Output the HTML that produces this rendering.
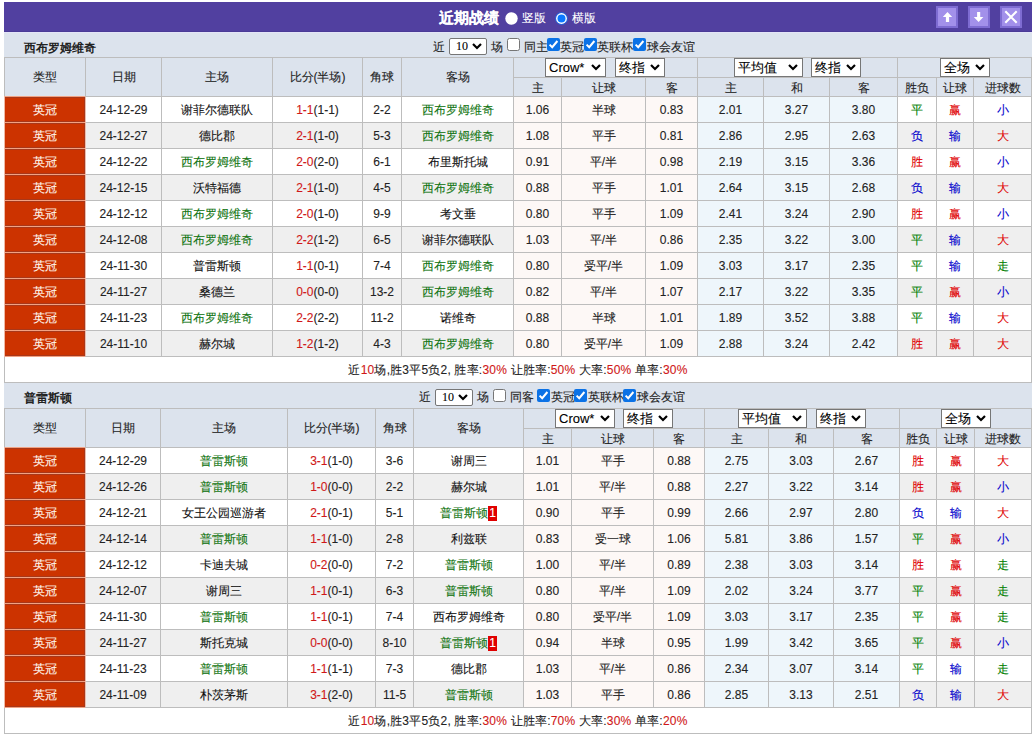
<!DOCTYPE html>
<html><head><meta charset="utf-8"><title>近期战绩</title><style>
html,body{margin:0;padding:0;}
body{width:1034px;height:736px;position:relative;overflow:hidden;background:#fff;font-family:"Liberation Sans",sans-serif;font-size:12px;color:#222;-webkit-text-stroke:0.1px currentColor;}
div{position:absolute;box-sizing:border-box;white-space:nowrap;}
.sel{background:#fff;border:1px solid #767676;border-radius:2px;box-sizing:content-box;color:#000;white-space:nowrap;overflow:hidden;}
.bd{background:#e00000;color:#fff;display:inline-block;line-height:15px;padding:0 1px;}
</style></head><body>
<div style="left:4px;top:2px;width:1028px;height:29px;background:#5140a0"></div>
<div style="left:4px;top:31px;width:1028px;height:1px;background:#4a3b96"></div>
<div style="left:4px;top:32px;width:1028px;height:1px;background:#e3e4f7"></div>
<div style="left:439px;top:10px;white-space:nowrap;font-weight:bold;font-size:15px;line-height:16px;color:#fff">近期战绩</div>
<svg style="position:absolute;left:505px;top:12px" width="13" height="13" viewBox="0 0 13 13"><circle cx="6.5" cy="6.5" r="6.2" fill="#fff"/></svg>
<div style="left:522px;top:12px;white-space:nowrap;font-size:12px;line-height:13px;color:#fff">竖版</div>
<svg style="position:absolute;left:555px;top:12px" width="13" height="13" viewBox="0 0 13 13"><circle cx="6.5" cy="6.5" r="6.5" fill="#2a62d6"/><circle cx="6.5" cy="6.5" r="5.4" fill="#fff"/><circle cx="6.5" cy="6.5" r="4" fill="#0a78ff"/></svg>
<div style="left:572px;top:12px;white-space:nowrap;font-size:12px;line-height:13px;color:#fff">横版</div>
<svg style="position:absolute;left:936px;top:6px" width="22" height="22" viewBox="0 0 22 22"><rect x="0" y="0" width="22" height="22" fill="#7e6cd2"/><rect x="2" y="2" width="18" height="18" fill="#a290ea"/><path d="M11.5 6 L16.2 11 L13.1 11 L13.1 16 L9.9 16 L9.9 11 L6.8 11 Z" fill="#fff"/></svg>
<svg style="position:absolute;left:968px;top:6px" width="22" height="22" viewBox="0 0 22 22"><rect x="0" y="0" width="22" height="22" fill="#7e6cd2"/><rect x="2" y="2" width="18" height="18" fill="#a290ea"/><path d="M10.6 16 L15.4 11 L12.2 11 L12.2 6 L9.1 6 L9.1 11 L5.8 11 Z" fill="#fff"/></svg>
<svg style="position:absolute;left:1000px;top:6px" width="22" height="22" viewBox="0 0 22 22"><rect x="0" y="0" width="22" height="22" fill="#7e6cd2"/><rect x="2" y="2" width="18" height="18" fill="#a290ea"/><path d="M5.3 5.3 L16.7 16.7 M16.7 5.3 L5.3 16.7" stroke="#fff" stroke-width="2.1"/></svg>
<div style="left:4px;top:33px;width:1028px;height:24px;background:#dce3ed"></div>
<div style="left:24px;top:41px;white-space:nowrap;font-weight:bold;font-size:12px;line-height:14px;color:#222;-webkit-text-stroke:0">西布罗姆维奇</div>
<div style="left:433px;top:41px;white-space:nowrap;line-height:12px">近</div>
<div class="sel" style="left:449px;top:38px;width:36px;height:15px;line-height:15px;font-size:12px;border-radius:2px;font-family:'Liberation Serif',serif"><span style="position:absolute;left:3px;top:0">&nbsp;10</span><svg style="position:absolute;right:4px;top:4px" width="10" height="7" viewBox="0 0 10 7"><path d="M1 1 L5 5 L9 1" fill="none" stroke="#000" stroke-width="2.2"/></svg></div>
<div style="left:491px;top:41px;white-space:nowrap;line-height:12px">场</div>
<svg style="position:absolute;left:507px;top:38px" width="13" height="13" viewBox="0 0 13 13"><rect x="0.5" y="0.5" width="12" height="12" rx="2" fill="#fff" stroke="#767676" stroke-width="1"/></svg>
<div style="left:524px;top:41px;white-space:nowrap;line-height:12px">同主</div>
<svg style="position:absolute;left:547px;top:38px" width="13" height="13" viewBox="0 0 13 13"><rect x="0" y="0" width="13" height="13" rx="2" fill="#0b72e6"/><path d="M2.6 6.6 L5.2 9.2 L10.4 3.0" fill="none" stroke="#fff" stroke-width="2"/></svg>
<div style="left:560px;top:41px;white-space:nowrap;line-height:12px">英冠</div>
<svg style="position:absolute;left:584px;top:38px" width="13" height="13" viewBox="0 0 13 13"><rect x="0" y="0" width="13" height="13" rx="2" fill="#0b72e6"/><path d="M2.6 6.6 L5.2 9.2 L10.4 3.0" fill="none" stroke="#fff" stroke-width="2"/></svg>
<div style="left:597px;top:41px;white-space:nowrap;line-height:12px">英联杯</div>
<svg style="position:absolute;left:633px;top:38px" width="13" height="13" viewBox="0 0 13 13"><rect x="0" y="0" width="13" height="13" rx="2" fill="#0b72e6"/><path d="M2.6 6.6 L5.2 9.2 L10.4 3.0" fill="none" stroke="#fff" stroke-width="2"/></svg>
<div style="left:647px;top:41px;white-space:nowrap;line-height:12px">球会友谊</div>
<div style="left:4px;top:57px;width:1028px;height:39px;background:#dce3ed"></div>
<div style="left:5px;top:58px;width:80px;height:38px;line-height:38px;text-align:center;color:#222">类型</div>
<div style="left:86px;top:58px;width:75px;height:38px;line-height:38px;text-align:center;color:#222">日期</div>
<div style="left:162px;top:58px;width:110px;height:38px;line-height:38px;text-align:center;color:#222">主场</div>
<div style="left:273px;top:58px;width:89px;height:38px;line-height:38px;text-align:center;color:#222">比分(半场)</div>
<div style="left:363px;top:58px;width:38px;height:38px;line-height:38px;text-align:center;color:#222">角球</div>
<div style="left:402px;top:58px;width:111px;height:38px;line-height:38px;text-align:center;color:#222">客场</div>
<div style="left:514px;top:78px;width:47px;height:18px;line-height:20px;text-align:center;color:#222">主</div>
<div style="left:562px;top:78px;width:83px;height:18px;line-height:20px;text-align:center;color:#222">让球</div>
<div style="left:646px;top:78px;width:51px;height:18px;line-height:20px;text-align:center;color:#222">客</div>
<div style="left:698px;top:78px;width:65px;height:18px;line-height:20px;text-align:center;color:#222">主</div>
<div style="left:764px;top:78px;width:65px;height:18px;line-height:20px;text-align:center;color:#222">和</div>
<div style="left:830px;top:78px;width:67px;height:18px;line-height:20px;text-align:center;color:#222">客</div>
<div style="left:898px;top:78px;width:38px;height:18px;line-height:20px;text-align:center;color:#222">胜负</div>
<div style="left:937px;top:78px;width:36px;height:18px;line-height:20px;text-align:center;color:#222">让球</div>
<div style="left:974px;top:78px;width:57px;height:18px;line-height:20px;text-align:center;color:#222">进球数</div>
<div style="left:5px;top:97px;width:80px;height:25px;line-height:27px;text-align:center;background:#cc3300;color:#fff8ef;box-shadow:inset 0 1px #a8381a,inset 0 -1px #a8381a,inset -1px 0 #a8381a">英冠</div>
<div style="left:86px;top:97px;width:75px;height:25px;line-height:27px;text-align:center;background:#fff;">24-12-29</div>
<div style="left:162px;top:97px;width:110px;height:25px;line-height:27px;text-align:center;background:#fff;"><span style="color:#111">谢菲尔德联队</span></div>
<div style="left:273px;top:97px;width:89px;height:25px;line-height:27px;text-align:center;background:#fff;"><span style="color:#d01818">1-1</span>(1-1)</div>
<div style="left:363px;top:97px;width:38px;height:25px;line-height:27px;text-align:center;background:#fff;">2-2</div>
<div style="left:402px;top:97px;width:111px;height:25px;line-height:27px;text-align:center;background:#fff;"><span style="color:#127512">西布罗姆维奇</span></div>
<div style="left:514px;top:97px;width:47px;height:25px;line-height:27px;text-align:center;background:#fdf8f6;">1.06</div>
<div style="left:562px;top:97px;width:83px;height:25px;line-height:27px;text-align:center;background:#fdf8f6;">半球</div>
<div style="left:646px;top:97px;width:51px;height:25px;line-height:27px;text-align:center;background:#fdf8f6;">0.83</div>
<div style="left:698px;top:97px;width:65px;height:25px;line-height:27px;text-align:center;background:#eef6fb;">2.01</div>
<div style="left:764px;top:97px;width:65px;height:25px;line-height:27px;text-align:center;background:#eef6fb;">3.27</div>
<div style="left:830px;top:97px;width:67px;height:25px;line-height:27px;text-align:center;background:#eef6fb;">3.80</div>
<div style="left:898px;top:97px;width:38px;height:25px;line-height:27px;text-align:center;background:#fff;"><span style="color:#008000">平</span></div>
<div style="left:937px;top:97px;width:36px;height:25px;line-height:27px;text-align:center;background:#fff;"><span style="color:#e00000">赢</span></div>
<div style="left:974px;top:97px;width:57px;height:25px;line-height:27px;text-align:center;background:#fff;"><span style="color:#0000cc">小</span></div>
<div style="left:5px;top:123px;width:80px;height:25px;line-height:27px;text-align:center;background:#cc3300;color:#fff8ef;box-shadow:inset 0 1px #a8381a,inset 0 -1px #a8381a,inset -1px 0 #a8381a">英冠</div>
<div style="left:86px;top:123px;width:75px;height:25px;line-height:27px;text-align:center;background:#efefef;">24-12-27</div>
<div style="left:162px;top:123px;width:110px;height:25px;line-height:27px;text-align:center;background:#efefef;"><span style="color:#111">德比郡</span></div>
<div style="left:273px;top:123px;width:89px;height:25px;line-height:27px;text-align:center;background:#efefef;"><span style="color:#d01818">2-1</span>(1-0)</div>
<div style="left:363px;top:123px;width:38px;height:25px;line-height:27px;text-align:center;background:#efefef;">5-3</div>
<div style="left:402px;top:123px;width:111px;height:25px;line-height:27px;text-align:center;background:#efefef;"><span style="color:#127512">西布罗姆维奇</span></div>
<div style="left:514px;top:123px;width:47px;height:25px;line-height:27px;text-align:center;background:#fdf8f6;">1.08</div>
<div style="left:562px;top:123px;width:83px;height:25px;line-height:27px;text-align:center;background:#fdf8f6;">平手</div>
<div style="left:646px;top:123px;width:51px;height:25px;line-height:27px;text-align:center;background:#fdf8f6;">0.81</div>
<div style="left:698px;top:123px;width:65px;height:25px;line-height:27px;text-align:center;background:#eef6fb;">2.86</div>
<div style="left:764px;top:123px;width:65px;height:25px;line-height:27px;text-align:center;background:#eef6fb;">2.95</div>
<div style="left:830px;top:123px;width:67px;height:25px;line-height:27px;text-align:center;background:#eef6fb;">2.63</div>
<div style="left:898px;top:123px;width:38px;height:25px;line-height:27px;text-align:center;background:#efefef;"><span style="color:#0000cc">负</span></div>
<div style="left:937px;top:123px;width:36px;height:25px;line-height:27px;text-align:center;background:#efefef;"><span style="color:#0000cc">输</span></div>
<div style="left:974px;top:123px;width:57px;height:25px;line-height:27px;text-align:center;background:#efefef;"><span style="color:#e00000">大</span></div>
<div style="left:5px;top:149px;width:80px;height:25px;line-height:27px;text-align:center;background:#cc3300;color:#fff8ef;box-shadow:inset 0 1px #a8381a,inset 0 -1px #a8381a,inset -1px 0 #a8381a">英冠</div>
<div style="left:86px;top:149px;width:75px;height:25px;line-height:27px;text-align:center;background:#fff;">24-12-22</div>
<div style="left:162px;top:149px;width:110px;height:25px;line-height:27px;text-align:center;background:#fff;"><span style="color:#127512">西布罗姆维奇</span></div>
<div style="left:273px;top:149px;width:89px;height:25px;line-height:27px;text-align:center;background:#fff;"><span style="color:#d01818">2-0</span>(2-0)</div>
<div style="left:363px;top:149px;width:38px;height:25px;line-height:27px;text-align:center;background:#fff;">6-1</div>
<div style="left:402px;top:149px;width:111px;height:25px;line-height:27px;text-align:center;background:#fff;"><span style="color:#111">布里斯托城</span></div>
<div style="left:514px;top:149px;width:47px;height:25px;line-height:27px;text-align:center;background:#fdf8f6;">0.91</div>
<div style="left:562px;top:149px;width:83px;height:25px;line-height:27px;text-align:center;background:#fdf8f6;">平/半</div>
<div style="left:646px;top:149px;width:51px;height:25px;line-height:27px;text-align:center;background:#fdf8f6;">0.98</div>
<div style="left:698px;top:149px;width:65px;height:25px;line-height:27px;text-align:center;background:#eef6fb;">2.19</div>
<div style="left:764px;top:149px;width:65px;height:25px;line-height:27px;text-align:center;background:#eef6fb;">3.15</div>
<div style="left:830px;top:149px;width:67px;height:25px;line-height:27px;text-align:center;background:#eef6fb;">3.36</div>
<div style="left:898px;top:149px;width:38px;height:25px;line-height:27px;text-align:center;background:#fff;"><span style="color:#e00000">胜</span></div>
<div style="left:937px;top:149px;width:36px;height:25px;line-height:27px;text-align:center;background:#fff;"><span style="color:#e00000">赢</span></div>
<div style="left:974px;top:149px;width:57px;height:25px;line-height:27px;text-align:center;background:#fff;"><span style="color:#0000cc">小</span></div>
<div style="left:5px;top:175px;width:80px;height:25px;line-height:27px;text-align:center;background:#cc3300;color:#fff8ef;box-shadow:inset 0 1px #a8381a,inset 0 -1px #a8381a,inset -1px 0 #a8381a">英冠</div>
<div style="left:86px;top:175px;width:75px;height:25px;line-height:27px;text-align:center;background:#efefef;">24-12-15</div>
<div style="left:162px;top:175px;width:110px;height:25px;line-height:27px;text-align:center;background:#efefef;"><span style="color:#111">沃特福德</span></div>
<div style="left:273px;top:175px;width:89px;height:25px;line-height:27px;text-align:center;background:#efefef;"><span style="color:#d01818">2-1</span>(1-0)</div>
<div style="left:363px;top:175px;width:38px;height:25px;line-height:27px;text-align:center;background:#efefef;">4-5</div>
<div style="left:402px;top:175px;width:111px;height:25px;line-height:27px;text-align:center;background:#efefef;"><span style="color:#127512">西布罗姆维奇</span></div>
<div style="left:514px;top:175px;width:47px;height:25px;line-height:27px;text-align:center;background:#fdf8f6;">0.88</div>
<div style="left:562px;top:175px;width:83px;height:25px;line-height:27px;text-align:center;background:#fdf8f6;">平手</div>
<div style="left:646px;top:175px;width:51px;height:25px;line-height:27px;text-align:center;background:#fdf8f6;">1.01</div>
<div style="left:698px;top:175px;width:65px;height:25px;line-height:27px;text-align:center;background:#eef6fb;">2.64</div>
<div style="left:764px;top:175px;width:65px;height:25px;line-height:27px;text-align:center;background:#eef6fb;">3.15</div>
<div style="left:830px;top:175px;width:67px;height:25px;line-height:27px;text-align:center;background:#eef6fb;">2.68</div>
<div style="left:898px;top:175px;width:38px;height:25px;line-height:27px;text-align:center;background:#efefef;"><span style="color:#0000cc">负</span></div>
<div style="left:937px;top:175px;width:36px;height:25px;line-height:27px;text-align:center;background:#efefef;"><span style="color:#0000cc">输</span></div>
<div style="left:974px;top:175px;width:57px;height:25px;line-height:27px;text-align:center;background:#efefef;"><span style="color:#e00000">大</span></div>
<div style="left:5px;top:201px;width:80px;height:25px;line-height:27px;text-align:center;background:#cc3300;color:#fff8ef;box-shadow:inset 0 1px #a8381a,inset 0 -1px #a8381a,inset -1px 0 #a8381a">英冠</div>
<div style="left:86px;top:201px;width:75px;height:25px;line-height:27px;text-align:center;background:#fff;">24-12-12</div>
<div style="left:162px;top:201px;width:110px;height:25px;line-height:27px;text-align:center;background:#fff;"><span style="color:#127512">西布罗姆维奇</span></div>
<div style="left:273px;top:201px;width:89px;height:25px;line-height:27px;text-align:center;background:#fff;"><span style="color:#d01818">2-0</span>(1-0)</div>
<div style="left:363px;top:201px;width:38px;height:25px;line-height:27px;text-align:center;background:#fff;">9-9</div>
<div style="left:402px;top:201px;width:111px;height:25px;line-height:27px;text-align:center;background:#fff;"><span style="color:#111">考文垂</span></div>
<div style="left:514px;top:201px;width:47px;height:25px;line-height:27px;text-align:center;background:#fdf8f6;">0.80</div>
<div style="left:562px;top:201px;width:83px;height:25px;line-height:27px;text-align:center;background:#fdf8f6;">平手</div>
<div style="left:646px;top:201px;width:51px;height:25px;line-height:27px;text-align:center;background:#fdf8f6;">1.09</div>
<div style="left:698px;top:201px;width:65px;height:25px;line-height:27px;text-align:center;background:#eef6fb;">2.41</div>
<div style="left:764px;top:201px;width:65px;height:25px;line-height:27px;text-align:center;background:#eef6fb;">3.24</div>
<div style="left:830px;top:201px;width:67px;height:25px;line-height:27px;text-align:center;background:#eef6fb;">2.90</div>
<div style="left:898px;top:201px;width:38px;height:25px;line-height:27px;text-align:center;background:#fff;"><span style="color:#e00000">胜</span></div>
<div style="left:937px;top:201px;width:36px;height:25px;line-height:27px;text-align:center;background:#fff;"><span style="color:#e00000">赢</span></div>
<div style="left:974px;top:201px;width:57px;height:25px;line-height:27px;text-align:center;background:#fff;"><span style="color:#0000cc">小</span></div>
<div style="left:5px;top:227px;width:80px;height:25px;line-height:27px;text-align:center;background:#cc3300;color:#fff8ef;box-shadow:inset 0 1px #a8381a,inset 0 -1px #a8381a,inset -1px 0 #a8381a">英冠</div>
<div style="left:86px;top:227px;width:75px;height:25px;line-height:27px;text-align:center;background:#efefef;">24-12-08</div>
<div style="left:162px;top:227px;width:110px;height:25px;line-height:27px;text-align:center;background:#efefef;"><span style="color:#127512">西布罗姆维奇</span></div>
<div style="left:273px;top:227px;width:89px;height:25px;line-height:27px;text-align:center;background:#efefef;"><span style="color:#d01818">2-2</span>(1-2)</div>
<div style="left:363px;top:227px;width:38px;height:25px;line-height:27px;text-align:center;background:#efefef;">6-5</div>
<div style="left:402px;top:227px;width:111px;height:25px;line-height:27px;text-align:center;background:#efefef;"><span style="color:#111">谢菲尔德联队</span></div>
<div style="left:514px;top:227px;width:47px;height:25px;line-height:27px;text-align:center;background:#fdf8f6;">1.03</div>
<div style="left:562px;top:227px;width:83px;height:25px;line-height:27px;text-align:center;background:#fdf8f6;">平/半</div>
<div style="left:646px;top:227px;width:51px;height:25px;line-height:27px;text-align:center;background:#fdf8f6;">0.86</div>
<div style="left:698px;top:227px;width:65px;height:25px;line-height:27px;text-align:center;background:#eef6fb;">2.35</div>
<div style="left:764px;top:227px;width:65px;height:25px;line-height:27px;text-align:center;background:#eef6fb;">3.22</div>
<div style="left:830px;top:227px;width:67px;height:25px;line-height:27px;text-align:center;background:#eef6fb;">3.00</div>
<div style="left:898px;top:227px;width:38px;height:25px;line-height:27px;text-align:center;background:#efefef;"><span style="color:#008000">平</span></div>
<div style="left:937px;top:227px;width:36px;height:25px;line-height:27px;text-align:center;background:#efefef;"><span style="color:#0000cc">输</span></div>
<div style="left:974px;top:227px;width:57px;height:25px;line-height:27px;text-align:center;background:#efefef;"><span style="color:#e00000">大</span></div>
<div style="left:5px;top:253px;width:80px;height:25px;line-height:27px;text-align:center;background:#cc3300;color:#fff8ef;box-shadow:inset 0 1px #a8381a,inset 0 -1px #a8381a,inset -1px 0 #a8381a">英冠</div>
<div style="left:86px;top:253px;width:75px;height:25px;line-height:27px;text-align:center;background:#fff;">24-11-30</div>
<div style="left:162px;top:253px;width:110px;height:25px;line-height:27px;text-align:center;background:#fff;"><span style="color:#111">普雷斯顿</span></div>
<div style="left:273px;top:253px;width:89px;height:25px;line-height:27px;text-align:center;background:#fff;"><span style="color:#d01818">1-1</span>(0-1)</div>
<div style="left:363px;top:253px;width:38px;height:25px;line-height:27px;text-align:center;background:#fff;">7-4</div>
<div style="left:402px;top:253px;width:111px;height:25px;line-height:27px;text-align:center;background:#fff;"><span style="color:#127512">西布罗姆维奇</span></div>
<div style="left:514px;top:253px;width:47px;height:25px;line-height:27px;text-align:center;background:#fdf8f6;">0.80</div>
<div style="left:562px;top:253px;width:83px;height:25px;line-height:27px;text-align:center;background:#fdf8f6;">受平/半</div>
<div style="left:646px;top:253px;width:51px;height:25px;line-height:27px;text-align:center;background:#fdf8f6;">1.09</div>
<div style="left:698px;top:253px;width:65px;height:25px;line-height:27px;text-align:center;background:#eef6fb;">3.03</div>
<div style="left:764px;top:253px;width:65px;height:25px;line-height:27px;text-align:center;background:#eef6fb;">3.17</div>
<div style="left:830px;top:253px;width:67px;height:25px;line-height:27px;text-align:center;background:#eef6fb;">2.35</div>
<div style="left:898px;top:253px;width:38px;height:25px;line-height:27px;text-align:center;background:#fff;"><span style="color:#008000">平</span></div>
<div style="left:937px;top:253px;width:36px;height:25px;line-height:27px;text-align:center;background:#fff;"><span style="color:#0000cc">输</span></div>
<div style="left:974px;top:253px;width:57px;height:25px;line-height:27px;text-align:center;background:#fff;"><span style="color:#008000">走</span></div>
<div style="left:5px;top:279px;width:80px;height:25px;line-height:27px;text-align:center;background:#cc3300;color:#fff8ef;box-shadow:inset 0 1px #a8381a,inset 0 -1px #a8381a,inset -1px 0 #a8381a">英冠</div>
<div style="left:86px;top:279px;width:75px;height:25px;line-height:27px;text-align:center;background:#efefef;">24-11-27</div>
<div style="left:162px;top:279px;width:110px;height:25px;line-height:27px;text-align:center;background:#efefef;"><span style="color:#111">桑德兰</span></div>
<div style="left:273px;top:279px;width:89px;height:25px;line-height:27px;text-align:center;background:#efefef;"><span style="color:#d01818">0-0</span>(0-0)</div>
<div style="left:363px;top:279px;width:38px;height:25px;line-height:27px;text-align:center;background:#efefef;">13-2</div>
<div style="left:402px;top:279px;width:111px;height:25px;line-height:27px;text-align:center;background:#efefef;"><span style="color:#127512">西布罗姆维奇</span></div>
<div style="left:514px;top:279px;width:47px;height:25px;line-height:27px;text-align:center;background:#fdf8f6;">0.82</div>
<div style="left:562px;top:279px;width:83px;height:25px;line-height:27px;text-align:center;background:#fdf8f6;">平/半</div>
<div style="left:646px;top:279px;width:51px;height:25px;line-height:27px;text-align:center;background:#fdf8f6;">1.07</div>
<div style="left:698px;top:279px;width:65px;height:25px;line-height:27px;text-align:center;background:#eef6fb;">2.17</div>
<div style="left:764px;top:279px;width:65px;height:25px;line-height:27px;text-align:center;background:#eef6fb;">3.22</div>
<div style="left:830px;top:279px;width:67px;height:25px;line-height:27px;text-align:center;background:#eef6fb;">3.35</div>
<div style="left:898px;top:279px;width:38px;height:25px;line-height:27px;text-align:center;background:#efefef;"><span style="color:#008000">平</span></div>
<div style="left:937px;top:279px;width:36px;height:25px;line-height:27px;text-align:center;background:#efefef;"><span style="color:#e00000">赢</span></div>
<div style="left:974px;top:279px;width:57px;height:25px;line-height:27px;text-align:center;background:#efefef;"><span style="color:#0000cc">小</span></div>
<div style="left:5px;top:305px;width:80px;height:25px;line-height:27px;text-align:center;background:#cc3300;color:#fff8ef;box-shadow:inset 0 1px #a8381a,inset 0 -1px #a8381a,inset -1px 0 #a8381a">英冠</div>
<div style="left:86px;top:305px;width:75px;height:25px;line-height:27px;text-align:center;background:#fff;">24-11-23</div>
<div style="left:162px;top:305px;width:110px;height:25px;line-height:27px;text-align:center;background:#fff;"><span style="color:#127512">西布罗姆维奇</span></div>
<div style="left:273px;top:305px;width:89px;height:25px;line-height:27px;text-align:center;background:#fff;"><span style="color:#d01818">2-2</span>(2-2)</div>
<div style="left:363px;top:305px;width:38px;height:25px;line-height:27px;text-align:center;background:#fff;">11-2</div>
<div style="left:402px;top:305px;width:111px;height:25px;line-height:27px;text-align:center;background:#fff;"><span style="color:#111">诺维奇</span></div>
<div style="left:514px;top:305px;width:47px;height:25px;line-height:27px;text-align:center;background:#fdf8f6;">0.88</div>
<div style="left:562px;top:305px;width:83px;height:25px;line-height:27px;text-align:center;background:#fdf8f6;">半球</div>
<div style="left:646px;top:305px;width:51px;height:25px;line-height:27px;text-align:center;background:#fdf8f6;">1.01</div>
<div style="left:698px;top:305px;width:65px;height:25px;line-height:27px;text-align:center;background:#eef6fb;">1.89</div>
<div style="left:764px;top:305px;width:65px;height:25px;line-height:27px;text-align:center;background:#eef6fb;">3.52</div>
<div style="left:830px;top:305px;width:67px;height:25px;line-height:27px;text-align:center;background:#eef6fb;">3.88</div>
<div style="left:898px;top:305px;width:38px;height:25px;line-height:27px;text-align:center;background:#fff;"><span style="color:#008000">平</span></div>
<div style="left:937px;top:305px;width:36px;height:25px;line-height:27px;text-align:center;background:#fff;"><span style="color:#0000cc">输</span></div>
<div style="left:974px;top:305px;width:57px;height:25px;line-height:27px;text-align:center;background:#fff;"><span style="color:#e00000">大</span></div>
<div style="left:5px;top:331px;width:80px;height:25px;line-height:27px;text-align:center;background:#cc3300;color:#fff8ef;box-shadow:inset 0 1px #a8381a,inset 0 -1px #a8381a,inset -1px 0 #a8381a">英冠</div>
<div style="left:86px;top:331px;width:75px;height:25px;line-height:27px;text-align:center;background:#efefef;">24-11-10</div>
<div style="left:162px;top:331px;width:110px;height:25px;line-height:27px;text-align:center;background:#efefef;"><span style="color:#111">赫尔城</span></div>
<div style="left:273px;top:331px;width:89px;height:25px;line-height:27px;text-align:center;background:#efefef;"><span style="color:#d01818">1-2</span>(1-2)</div>
<div style="left:363px;top:331px;width:38px;height:25px;line-height:27px;text-align:center;background:#efefef;">4-3</div>
<div style="left:402px;top:331px;width:111px;height:25px;line-height:27px;text-align:center;background:#efefef;"><span style="color:#127512">西布罗姆维奇</span></div>
<div style="left:514px;top:331px;width:47px;height:25px;line-height:27px;text-align:center;background:#fdf8f6;">0.80</div>
<div style="left:562px;top:331px;width:83px;height:25px;line-height:27px;text-align:center;background:#fdf8f6;">受平/半</div>
<div style="left:646px;top:331px;width:51px;height:25px;line-height:27px;text-align:center;background:#fdf8f6;">1.09</div>
<div style="left:698px;top:331px;width:65px;height:25px;line-height:27px;text-align:center;background:#eef6fb;">2.88</div>
<div style="left:764px;top:331px;width:65px;height:25px;line-height:27px;text-align:center;background:#eef6fb;">3.24</div>
<div style="left:830px;top:331px;width:67px;height:25px;line-height:27px;text-align:center;background:#eef6fb;">2.42</div>
<div style="left:898px;top:331px;width:38px;height:25px;line-height:27px;text-align:center;background:#efefef;"><span style="color:#e00000">胜</span></div>
<div style="left:937px;top:331px;width:36px;height:25px;line-height:27px;text-align:center;background:#efefef;"><span style="color:#e00000">赢</span></div>
<div style="left:974px;top:331px;width:57px;height:25px;line-height:27px;text-align:center;background:#efefef;"><span style="color:#e00000">大</span></div>
<div style="left:5px;top:357px;width:1026px;height:25px;background:#fff;text-align:center;line-height:27px;color:#222;letter-spacing:0.2px">近<span style="color:#d01818">10</span>场,胜3平5负2, 胜率:<span style="color:#d01818">30%</span> 让胜率:<span style="color:#d01818">50%</span> 大率:<span style="color:#d01818">50%</span> 单率:<span style="color:#d01818">30%</span></div>
<div style="left:4px;top:57px;width:1028px;height:1px;background:#bdbdbd"></div>
<div style="left:513px;top:77px;width:519px;height:1px;background:#bdbdbd"></div>
<div style="left:4px;top:96px;width:1028px;height:1px;background:#bdbdbd"></div>
<div style="left:4px;top:122px;width:1028px;height:1px;background:#bdbdbd"></div>
<div style="left:4px;top:148px;width:1028px;height:1px;background:#bdbdbd"></div>
<div style="left:4px;top:174px;width:1028px;height:1px;background:#bdbdbd"></div>
<div style="left:4px;top:200px;width:1028px;height:1px;background:#bdbdbd"></div>
<div style="left:4px;top:226px;width:1028px;height:1px;background:#bdbdbd"></div>
<div style="left:4px;top:252px;width:1028px;height:1px;background:#bdbdbd"></div>
<div style="left:4px;top:278px;width:1028px;height:1px;background:#bdbdbd"></div>
<div style="left:4px;top:304px;width:1028px;height:1px;background:#bdbdbd"></div>
<div style="left:4px;top:330px;width:1028px;height:1px;background:#bdbdbd"></div>
<div style="left:4px;top:356px;width:1028px;height:1px;background:#bdbdbd"></div>
<div style="left:4px;top:382px;width:1028px;height:1px;background:#bdbdbd"></div>
<div style="left:4px;top:57px;width:1px;height:326px;background:#bdbdbd"></div>
<div style="left:1031px;top:57px;width:1px;height:326px;background:#bdbdbd"></div>
<div style="left:85px;top:57px;width:1px;height:299px;background:#bdbdbd"></div>
<div style="left:161px;top:57px;width:1px;height:299px;background:#bdbdbd"></div>
<div style="left:272px;top:57px;width:1px;height:299px;background:#bdbdbd"></div>
<div style="left:362px;top:57px;width:1px;height:299px;background:#bdbdbd"></div>
<div style="left:401px;top:57px;width:1px;height:299px;background:#bdbdbd"></div>
<div style="left:513px;top:57px;width:1px;height:299px;background:#bdbdbd"></div>
<div style="left:561px;top:77px;width:1px;height:279px;background:#bdbdbd"></div>
<div style="left:645px;top:77px;width:1px;height:279px;background:#bdbdbd"></div>
<div style="left:697px;top:57px;width:1px;height:299px;background:#bdbdbd"></div>
<div style="left:763px;top:77px;width:1px;height:279px;background:#bdbdbd"></div>
<div style="left:829px;top:77px;width:1px;height:279px;background:#bdbdbd"></div>
<div style="left:897px;top:57px;width:1px;height:299px;background:#bdbdbd"></div>
<div style="left:936px;top:77px;width:1px;height:279px;background:#bdbdbd"></div>
<div style="left:973px;top:77px;width:1px;height:279px;background:#bdbdbd"></div>
<div style="left:5px;top:96px;width:80px;height:1px;background:#f2a283"></div>
<div style="left:5px;top:122px;width:80px;height:1px;background:#f2a283"></div>
<div style="left:5px;top:148px;width:80px;height:1px;background:#f2a283"></div>
<div style="left:5px;top:174px;width:80px;height:1px;background:#f2a283"></div>
<div style="left:5px;top:200px;width:80px;height:1px;background:#f2a283"></div>
<div style="left:5px;top:226px;width:80px;height:1px;background:#f2a283"></div>
<div style="left:5px;top:252px;width:80px;height:1px;background:#f2a283"></div>
<div style="left:5px;top:278px;width:80px;height:1px;background:#f2a283"></div>
<div style="left:5px;top:304px;width:80px;height:1px;background:#f2a283"></div>
<div style="left:5px;top:330px;width:80px;height:1px;background:#f2a283"></div>
<div style="left:5px;top:356px;width:80px;height:1px;background:#f2a283"></div>
<div style="left:85px;top:97px;width:1px;height:259px;background:#eebcac"></div>
<div style="left:4px;top:96px;width:1px;height:261px;background:#f0b8a4"></div>
<div class="sel" style="left:545px;top:58px;width:59px;height:17px;line-height:17px;font-size:13px;border-radius:0px;"><span style="position:absolute;left:3px;top:0">Crow*</span><svg style="position:absolute;right:4px;top:5px" width="10" height="7" viewBox="0 0 10 7"><path d="M1 1 L5 5 L9 1" fill="none" stroke="#000" stroke-width="2.2"/></svg></div>
<div class="sel" style="left:615px;top:58px;width:48px;height:17px;line-height:17px;font-size:13px;border-radius:0px;"><span style="position:absolute;left:3px;top:0">终指</span><svg style="position:absolute;right:4px;top:5px" width="10" height="7" viewBox="0 0 10 7"><path d="M1 1 L5 5 L9 1" fill="none" stroke="#000" stroke-width="2.2"/></svg></div>
<div class="sel" style="left:734px;top:58px;width:67px;height:17px;line-height:17px;font-size:13px;border-radius:0px;"><span style="position:absolute;left:3px;top:0">平均值</span><svg style="position:absolute;right:4px;top:5px" width="10" height="7" viewBox="0 0 10 7"><path d="M1 1 L5 5 L9 1" fill="none" stroke="#000" stroke-width="2.2"/></svg></div>
<div class="sel" style="left:811px;top:58px;width:48px;height:17px;line-height:17px;font-size:13px;border-radius:0px;"><span style="position:absolute;left:3px;top:0">终指</span><svg style="position:absolute;right:4px;top:5px" width="10" height="7" viewBox="0 0 10 7"><path d="M1 1 L5 5 L9 1" fill="none" stroke="#000" stroke-width="2.2"/></svg></div>
<div class="sel" style="left:940px;top:58px;width:48px;height:17px;line-height:17px;font-size:13px;border-radius:0px;"><span style="position:absolute;left:3px;top:0">全场</span><svg style="position:absolute;right:4px;top:5px" width="10" height="7" viewBox="0 0 10 7"><path d="M1 1 L5 5 L9 1" fill="none" stroke="#000" stroke-width="2.2"/></svg></div>
<div style="left:4px;top:383px;width:1028px;height:25px;background:#dce3ed"></div>
<div style="left:24px;top:391px;white-space:nowrap;font-weight:bold;font-size:12px;line-height:14px;color:#222;-webkit-text-stroke:0">普雷斯顿</div>
<div style="left:419px;top:391px;white-space:nowrap;line-height:12px">近</div>
<div class="sel" style="left:435px;top:389px;width:36px;height:15px;line-height:15px;font-size:12px;border-radius:2px;font-family:'Liberation Serif',serif"><span style="position:absolute;left:3px;top:0">&nbsp;10</span><svg style="position:absolute;right:4px;top:4px" width="10" height="7" viewBox="0 0 10 7"><path d="M1 1 L5 5 L9 1" fill="none" stroke="#000" stroke-width="2.2"/></svg></div>
<div style="left:477px;top:391px;white-space:nowrap;line-height:12px">场</div>
<svg style="position:absolute;left:493px;top:389px" width="13" height="13" viewBox="0 0 13 13"><rect x="0.5" y="0.5" width="12" height="12" rx="2" fill="#fff" stroke="#767676" stroke-width="1"/></svg>
<div style="left:510px;top:391px;white-space:nowrap;line-height:12px">同客</div>
<svg style="position:absolute;left:537px;top:389px" width="13" height="13" viewBox="0 0 13 13"><rect x="0" y="0" width="13" height="13" rx="2" fill="#0b72e6"/><path d="M2.6 6.6 L5.2 9.2 L10.4 3.0" fill="none" stroke="#fff" stroke-width="2"/></svg>
<div style="left:551px;top:391px;white-space:nowrap;line-height:12px">英冠</div>
<svg style="position:absolute;left:574px;top:389px" width="13" height="13" viewBox="0 0 13 13"><rect x="0" y="0" width="13" height="13" rx="2" fill="#0b72e6"/><path d="M2.6 6.6 L5.2 9.2 L10.4 3.0" fill="none" stroke="#fff" stroke-width="2"/></svg>
<div style="left:588px;top:391px;white-space:nowrap;line-height:12px">英联杯</div>
<svg style="position:absolute;left:623px;top:389px" width="13" height="13" viewBox="0 0 13 13"><rect x="0" y="0" width="13" height="13" rx="2" fill="#0b72e6"/><path d="M2.6 6.6 L5.2 9.2 L10.4 3.0" fill="none" stroke="#fff" stroke-width="2"/></svg>
<div style="left:637px;top:391px;white-space:nowrap;line-height:12px">球会友谊</div>
<div style="left:4px;top:408px;width:1028px;height:39px;background:#dce3ed"></div>
<div style="left:5px;top:409px;width:80px;height:38px;line-height:38px;text-align:center;color:#222">类型</div>
<div style="left:86px;top:409px;width:74px;height:38px;line-height:38px;text-align:center;color:#222">日期</div>
<div style="left:161px;top:409px;width:126px;height:38px;line-height:38px;text-align:center;color:#222">主场</div>
<div style="left:288px;top:409px;width:87px;height:38px;line-height:38px;text-align:center;color:#222">比分(半场)</div>
<div style="left:376px;top:409px;width:37px;height:38px;line-height:38px;text-align:center;color:#222">角球</div>
<div style="left:414px;top:409px;width:109px;height:38px;line-height:38px;text-align:center;color:#222">客场</div>
<div style="left:524px;top:429px;width:47px;height:18px;line-height:20px;text-align:center;color:#222">主</div>
<div style="left:572px;top:429px;width:81px;height:18px;line-height:20px;text-align:center;color:#222">让球</div>
<div style="left:654px;top:429px;width:50px;height:18px;line-height:20px;text-align:center;color:#222">客</div>
<div style="left:705px;top:429px;width:63px;height:18px;line-height:20px;text-align:center;color:#222">主</div>
<div style="left:769px;top:429px;width:64px;height:18px;line-height:20px;text-align:center;color:#222">和</div>
<div style="left:834px;top:429px;width:65px;height:18px;line-height:20px;text-align:center;color:#222">客</div>
<div style="left:900px;top:429px;width:36px;height:18px;line-height:20px;text-align:center;color:#222">胜负</div>
<div style="left:937px;top:429px;width:37px;height:18px;line-height:20px;text-align:center;color:#222">让球</div>
<div style="left:975px;top:429px;width:56px;height:18px;line-height:20px;text-align:center;color:#222">进球数</div>
<div style="left:5px;top:448px;width:80px;height:25px;line-height:27px;text-align:center;background:#cc3300;color:#fff8ef;box-shadow:inset 0 1px #a8381a,inset 0 -1px #a8381a,inset -1px 0 #a8381a">英冠</div>
<div style="left:86px;top:448px;width:74px;height:25px;line-height:27px;text-align:center;background:#fff;">24-12-29</div>
<div style="left:161px;top:448px;width:126px;height:25px;line-height:27px;text-align:center;background:#fff;"><span style="color:#127512">普雷斯顿</span></div>
<div style="left:288px;top:448px;width:87px;height:25px;line-height:27px;text-align:center;background:#fff;"><span style="color:#d01818">3-1</span>(1-0)</div>
<div style="left:376px;top:448px;width:37px;height:25px;line-height:27px;text-align:center;background:#fff;">3-6</div>
<div style="left:414px;top:448px;width:109px;height:25px;line-height:27px;text-align:center;background:#fff;"><span style="color:#111">谢周三</span></div>
<div style="left:524px;top:448px;width:47px;height:25px;line-height:27px;text-align:center;background:#fdf8f6;">1.01</div>
<div style="left:572px;top:448px;width:81px;height:25px;line-height:27px;text-align:center;background:#fdf8f6;">平手</div>
<div style="left:654px;top:448px;width:50px;height:25px;line-height:27px;text-align:center;background:#fdf8f6;">0.88</div>
<div style="left:705px;top:448px;width:63px;height:25px;line-height:27px;text-align:center;background:#eef6fb;">2.75</div>
<div style="left:769px;top:448px;width:64px;height:25px;line-height:27px;text-align:center;background:#eef6fb;">3.03</div>
<div style="left:834px;top:448px;width:65px;height:25px;line-height:27px;text-align:center;background:#eef6fb;">2.67</div>
<div style="left:900px;top:448px;width:36px;height:25px;line-height:27px;text-align:center;background:#fff;"><span style="color:#e00000">胜</span></div>
<div style="left:937px;top:448px;width:37px;height:25px;line-height:27px;text-align:center;background:#fff;"><span style="color:#e00000">赢</span></div>
<div style="left:975px;top:448px;width:56px;height:25px;line-height:27px;text-align:center;background:#fff;"><span style="color:#e00000">大</span></div>
<div style="left:5px;top:474px;width:80px;height:25px;line-height:27px;text-align:center;background:#cc3300;color:#fff8ef;box-shadow:inset 0 1px #a8381a,inset 0 -1px #a8381a,inset -1px 0 #a8381a">英冠</div>
<div style="left:86px;top:474px;width:74px;height:25px;line-height:27px;text-align:center;background:#efefef;">24-12-26</div>
<div style="left:161px;top:474px;width:126px;height:25px;line-height:27px;text-align:center;background:#efefef;"><span style="color:#127512">普雷斯顿</span></div>
<div style="left:288px;top:474px;width:87px;height:25px;line-height:27px;text-align:center;background:#efefef;"><span style="color:#d01818">1-0</span>(0-0)</div>
<div style="left:376px;top:474px;width:37px;height:25px;line-height:27px;text-align:center;background:#efefef;">2-2</div>
<div style="left:414px;top:474px;width:109px;height:25px;line-height:27px;text-align:center;background:#efefef;"><span style="color:#111">赫尔城</span></div>
<div style="left:524px;top:474px;width:47px;height:25px;line-height:27px;text-align:center;background:#fdf8f6;">1.01</div>
<div style="left:572px;top:474px;width:81px;height:25px;line-height:27px;text-align:center;background:#fdf8f6;">平/半</div>
<div style="left:654px;top:474px;width:50px;height:25px;line-height:27px;text-align:center;background:#fdf8f6;">0.88</div>
<div style="left:705px;top:474px;width:63px;height:25px;line-height:27px;text-align:center;background:#eef6fb;">2.27</div>
<div style="left:769px;top:474px;width:64px;height:25px;line-height:27px;text-align:center;background:#eef6fb;">3.22</div>
<div style="left:834px;top:474px;width:65px;height:25px;line-height:27px;text-align:center;background:#eef6fb;">3.14</div>
<div style="left:900px;top:474px;width:36px;height:25px;line-height:27px;text-align:center;background:#efefef;"><span style="color:#e00000">胜</span></div>
<div style="left:937px;top:474px;width:37px;height:25px;line-height:27px;text-align:center;background:#efefef;"><span style="color:#e00000">赢</span></div>
<div style="left:975px;top:474px;width:56px;height:25px;line-height:27px;text-align:center;background:#efefef;"><span style="color:#0000cc">小</span></div>
<div style="left:5px;top:500px;width:80px;height:25px;line-height:27px;text-align:center;background:#cc3300;color:#fff8ef;box-shadow:inset 0 1px #a8381a,inset 0 -1px #a8381a,inset -1px 0 #a8381a">英冠</div>
<div style="left:86px;top:500px;width:74px;height:25px;line-height:27px;text-align:center;background:#fff;">24-12-21</div>
<div style="left:161px;top:500px;width:126px;height:25px;line-height:27px;text-align:center;background:#fff;"><span style="color:#111">女王公园巡游者</span></div>
<div style="left:288px;top:500px;width:87px;height:25px;line-height:27px;text-align:center;background:#fff;"><span style="color:#d01818">2-1</span>(0-1)</div>
<div style="left:376px;top:500px;width:37px;height:25px;line-height:27px;text-align:center;background:#fff;">5-1</div>
<div style="left:414px;top:500px;width:109px;height:25px;line-height:27px;text-align:center;background:#fff;"><span style="color:#127512">普雷斯顿</span><span class="bd">1</span></div>
<div style="left:524px;top:500px;width:47px;height:25px;line-height:27px;text-align:center;background:#fdf8f6;">0.90</div>
<div style="left:572px;top:500px;width:81px;height:25px;line-height:27px;text-align:center;background:#fdf8f6;">平手</div>
<div style="left:654px;top:500px;width:50px;height:25px;line-height:27px;text-align:center;background:#fdf8f6;">0.99</div>
<div style="left:705px;top:500px;width:63px;height:25px;line-height:27px;text-align:center;background:#eef6fb;">2.66</div>
<div style="left:769px;top:500px;width:64px;height:25px;line-height:27px;text-align:center;background:#eef6fb;">2.97</div>
<div style="left:834px;top:500px;width:65px;height:25px;line-height:27px;text-align:center;background:#eef6fb;">2.80</div>
<div style="left:900px;top:500px;width:36px;height:25px;line-height:27px;text-align:center;background:#fff;"><span style="color:#0000cc">负</span></div>
<div style="left:937px;top:500px;width:37px;height:25px;line-height:27px;text-align:center;background:#fff;"><span style="color:#0000cc">输</span></div>
<div style="left:975px;top:500px;width:56px;height:25px;line-height:27px;text-align:center;background:#fff;"><span style="color:#e00000">大</span></div>
<div style="left:5px;top:526px;width:80px;height:25px;line-height:27px;text-align:center;background:#cc3300;color:#fff8ef;box-shadow:inset 0 1px #a8381a,inset 0 -1px #a8381a,inset -1px 0 #a8381a">英冠</div>
<div style="left:86px;top:526px;width:74px;height:25px;line-height:27px;text-align:center;background:#efefef;">24-12-14</div>
<div style="left:161px;top:526px;width:126px;height:25px;line-height:27px;text-align:center;background:#efefef;"><span style="color:#127512">普雷斯顿</span></div>
<div style="left:288px;top:526px;width:87px;height:25px;line-height:27px;text-align:center;background:#efefef;"><span style="color:#d01818">1-1</span>(1-0)</div>
<div style="left:376px;top:526px;width:37px;height:25px;line-height:27px;text-align:center;background:#efefef;">2-8</div>
<div style="left:414px;top:526px;width:109px;height:25px;line-height:27px;text-align:center;background:#efefef;"><span style="color:#111">利兹联</span></div>
<div style="left:524px;top:526px;width:47px;height:25px;line-height:27px;text-align:center;background:#fdf8f6;">0.83</div>
<div style="left:572px;top:526px;width:81px;height:25px;line-height:27px;text-align:center;background:#fdf8f6;">受一球</div>
<div style="left:654px;top:526px;width:50px;height:25px;line-height:27px;text-align:center;background:#fdf8f6;">1.06</div>
<div style="left:705px;top:526px;width:63px;height:25px;line-height:27px;text-align:center;background:#eef6fb;">5.81</div>
<div style="left:769px;top:526px;width:64px;height:25px;line-height:27px;text-align:center;background:#eef6fb;">3.86</div>
<div style="left:834px;top:526px;width:65px;height:25px;line-height:27px;text-align:center;background:#eef6fb;">1.57</div>
<div style="left:900px;top:526px;width:36px;height:25px;line-height:27px;text-align:center;background:#efefef;"><span style="color:#008000">平</span></div>
<div style="left:937px;top:526px;width:37px;height:25px;line-height:27px;text-align:center;background:#efefef;"><span style="color:#e00000">赢</span></div>
<div style="left:975px;top:526px;width:56px;height:25px;line-height:27px;text-align:center;background:#efefef;"><span style="color:#0000cc">小</span></div>
<div style="left:5px;top:552px;width:80px;height:25px;line-height:27px;text-align:center;background:#cc3300;color:#fff8ef;box-shadow:inset 0 1px #a8381a,inset 0 -1px #a8381a,inset -1px 0 #a8381a">英冠</div>
<div style="left:86px;top:552px;width:74px;height:25px;line-height:27px;text-align:center;background:#fff;">24-12-12</div>
<div style="left:161px;top:552px;width:126px;height:25px;line-height:27px;text-align:center;background:#fff;"><span style="color:#111">卡迪夫城</span></div>
<div style="left:288px;top:552px;width:87px;height:25px;line-height:27px;text-align:center;background:#fff;"><span style="color:#d01818">0-2</span>(0-0)</div>
<div style="left:376px;top:552px;width:37px;height:25px;line-height:27px;text-align:center;background:#fff;">7-2</div>
<div style="left:414px;top:552px;width:109px;height:25px;line-height:27px;text-align:center;background:#fff;"><span style="color:#127512">普雷斯顿</span></div>
<div style="left:524px;top:552px;width:47px;height:25px;line-height:27px;text-align:center;background:#fdf8f6;">1.00</div>
<div style="left:572px;top:552px;width:81px;height:25px;line-height:27px;text-align:center;background:#fdf8f6;">平/半</div>
<div style="left:654px;top:552px;width:50px;height:25px;line-height:27px;text-align:center;background:#fdf8f6;">0.89</div>
<div style="left:705px;top:552px;width:63px;height:25px;line-height:27px;text-align:center;background:#eef6fb;">2.38</div>
<div style="left:769px;top:552px;width:64px;height:25px;line-height:27px;text-align:center;background:#eef6fb;">3.03</div>
<div style="left:834px;top:552px;width:65px;height:25px;line-height:27px;text-align:center;background:#eef6fb;">3.14</div>
<div style="left:900px;top:552px;width:36px;height:25px;line-height:27px;text-align:center;background:#fff;"><span style="color:#e00000">胜</span></div>
<div style="left:937px;top:552px;width:37px;height:25px;line-height:27px;text-align:center;background:#fff;"><span style="color:#e00000">赢</span></div>
<div style="left:975px;top:552px;width:56px;height:25px;line-height:27px;text-align:center;background:#fff;"><span style="color:#008000">走</span></div>
<div style="left:5px;top:578px;width:80px;height:25px;line-height:27px;text-align:center;background:#cc3300;color:#fff8ef;box-shadow:inset 0 1px #a8381a,inset 0 -1px #a8381a,inset -1px 0 #a8381a">英冠</div>
<div style="left:86px;top:578px;width:74px;height:25px;line-height:27px;text-align:center;background:#efefef;">24-12-07</div>
<div style="left:161px;top:578px;width:126px;height:25px;line-height:27px;text-align:center;background:#efefef;"><span style="color:#111">谢周三</span></div>
<div style="left:288px;top:578px;width:87px;height:25px;line-height:27px;text-align:center;background:#efefef;"><span style="color:#d01818">1-1</span>(0-1)</div>
<div style="left:376px;top:578px;width:37px;height:25px;line-height:27px;text-align:center;background:#efefef;">6-3</div>
<div style="left:414px;top:578px;width:109px;height:25px;line-height:27px;text-align:center;background:#efefef;"><span style="color:#127512">普雷斯顿</span></div>
<div style="left:524px;top:578px;width:47px;height:25px;line-height:27px;text-align:center;background:#fdf8f6;">0.80</div>
<div style="left:572px;top:578px;width:81px;height:25px;line-height:27px;text-align:center;background:#fdf8f6;">平/半</div>
<div style="left:654px;top:578px;width:50px;height:25px;line-height:27px;text-align:center;background:#fdf8f6;">1.09</div>
<div style="left:705px;top:578px;width:63px;height:25px;line-height:27px;text-align:center;background:#eef6fb;">2.02</div>
<div style="left:769px;top:578px;width:64px;height:25px;line-height:27px;text-align:center;background:#eef6fb;">3.24</div>
<div style="left:834px;top:578px;width:65px;height:25px;line-height:27px;text-align:center;background:#eef6fb;">3.77</div>
<div style="left:900px;top:578px;width:36px;height:25px;line-height:27px;text-align:center;background:#efefef;"><span style="color:#008000">平</span></div>
<div style="left:937px;top:578px;width:37px;height:25px;line-height:27px;text-align:center;background:#efefef;"><span style="color:#e00000">赢</span></div>
<div style="left:975px;top:578px;width:56px;height:25px;line-height:27px;text-align:center;background:#efefef;"><span style="color:#008000">走</span></div>
<div style="left:5px;top:604px;width:80px;height:25px;line-height:27px;text-align:center;background:#cc3300;color:#fff8ef;box-shadow:inset 0 1px #a8381a,inset 0 -1px #a8381a,inset -1px 0 #a8381a">英冠</div>
<div style="left:86px;top:604px;width:74px;height:25px;line-height:27px;text-align:center;background:#fff;">24-11-30</div>
<div style="left:161px;top:604px;width:126px;height:25px;line-height:27px;text-align:center;background:#fff;"><span style="color:#127512">普雷斯顿</span></div>
<div style="left:288px;top:604px;width:87px;height:25px;line-height:27px;text-align:center;background:#fff;"><span style="color:#d01818">1-1</span>(0-1)</div>
<div style="left:376px;top:604px;width:37px;height:25px;line-height:27px;text-align:center;background:#fff;">7-4</div>
<div style="left:414px;top:604px;width:109px;height:25px;line-height:27px;text-align:center;background:#fff;"><span style="color:#111">西布罗姆维奇</span></div>
<div style="left:524px;top:604px;width:47px;height:25px;line-height:27px;text-align:center;background:#fdf8f6;">0.80</div>
<div style="left:572px;top:604px;width:81px;height:25px;line-height:27px;text-align:center;background:#fdf8f6;">受平/半</div>
<div style="left:654px;top:604px;width:50px;height:25px;line-height:27px;text-align:center;background:#fdf8f6;">1.09</div>
<div style="left:705px;top:604px;width:63px;height:25px;line-height:27px;text-align:center;background:#eef6fb;">3.03</div>
<div style="left:769px;top:604px;width:64px;height:25px;line-height:27px;text-align:center;background:#eef6fb;">3.17</div>
<div style="left:834px;top:604px;width:65px;height:25px;line-height:27px;text-align:center;background:#eef6fb;">2.35</div>
<div style="left:900px;top:604px;width:36px;height:25px;line-height:27px;text-align:center;background:#fff;"><span style="color:#008000">平</span></div>
<div style="left:937px;top:604px;width:37px;height:25px;line-height:27px;text-align:center;background:#fff;"><span style="color:#e00000">赢</span></div>
<div style="left:975px;top:604px;width:56px;height:25px;line-height:27px;text-align:center;background:#fff;"><span style="color:#008000">走</span></div>
<div style="left:5px;top:630px;width:80px;height:25px;line-height:27px;text-align:center;background:#cc3300;color:#fff8ef;box-shadow:inset 0 1px #a8381a,inset 0 -1px #a8381a,inset -1px 0 #a8381a">英冠</div>
<div style="left:86px;top:630px;width:74px;height:25px;line-height:27px;text-align:center;background:#efefef;">24-11-27</div>
<div style="left:161px;top:630px;width:126px;height:25px;line-height:27px;text-align:center;background:#efefef;"><span style="color:#111">斯托克城</span></div>
<div style="left:288px;top:630px;width:87px;height:25px;line-height:27px;text-align:center;background:#efefef;"><span style="color:#d01818">0-0</span>(0-0)</div>
<div style="left:376px;top:630px;width:37px;height:25px;line-height:27px;text-align:center;background:#efefef;">8-10</div>
<div style="left:414px;top:630px;width:109px;height:25px;line-height:27px;text-align:center;background:#efefef;"><span style="color:#127512">普雷斯顿</span><span class="bd">1</span></div>
<div style="left:524px;top:630px;width:47px;height:25px;line-height:27px;text-align:center;background:#fdf8f6;">0.94</div>
<div style="left:572px;top:630px;width:81px;height:25px;line-height:27px;text-align:center;background:#fdf8f6;">半球</div>
<div style="left:654px;top:630px;width:50px;height:25px;line-height:27px;text-align:center;background:#fdf8f6;">0.95</div>
<div style="left:705px;top:630px;width:63px;height:25px;line-height:27px;text-align:center;background:#eef6fb;">1.99</div>
<div style="left:769px;top:630px;width:64px;height:25px;line-height:27px;text-align:center;background:#eef6fb;">3.42</div>
<div style="left:834px;top:630px;width:65px;height:25px;line-height:27px;text-align:center;background:#eef6fb;">3.65</div>
<div style="left:900px;top:630px;width:36px;height:25px;line-height:27px;text-align:center;background:#efefef;"><span style="color:#008000">平</span></div>
<div style="left:937px;top:630px;width:37px;height:25px;line-height:27px;text-align:center;background:#efefef;"><span style="color:#e00000">赢</span></div>
<div style="left:975px;top:630px;width:56px;height:25px;line-height:27px;text-align:center;background:#efefef;"><span style="color:#0000cc">小</span></div>
<div style="left:5px;top:656px;width:80px;height:25px;line-height:27px;text-align:center;background:#cc3300;color:#fff8ef;box-shadow:inset 0 1px #a8381a,inset 0 -1px #a8381a,inset -1px 0 #a8381a">英冠</div>
<div style="left:86px;top:656px;width:74px;height:25px;line-height:27px;text-align:center;background:#fff;">24-11-23</div>
<div style="left:161px;top:656px;width:126px;height:25px;line-height:27px;text-align:center;background:#fff;"><span style="color:#127512">普雷斯顿</span></div>
<div style="left:288px;top:656px;width:87px;height:25px;line-height:27px;text-align:center;background:#fff;"><span style="color:#d01818">1-1</span>(1-1)</div>
<div style="left:376px;top:656px;width:37px;height:25px;line-height:27px;text-align:center;background:#fff;">7-3</div>
<div style="left:414px;top:656px;width:109px;height:25px;line-height:27px;text-align:center;background:#fff;"><span style="color:#111">德比郡</span></div>
<div style="left:524px;top:656px;width:47px;height:25px;line-height:27px;text-align:center;background:#fdf8f6;">1.03</div>
<div style="left:572px;top:656px;width:81px;height:25px;line-height:27px;text-align:center;background:#fdf8f6;">平/半</div>
<div style="left:654px;top:656px;width:50px;height:25px;line-height:27px;text-align:center;background:#fdf8f6;">0.86</div>
<div style="left:705px;top:656px;width:63px;height:25px;line-height:27px;text-align:center;background:#eef6fb;">2.34</div>
<div style="left:769px;top:656px;width:64px;height:25px;line-height:27px;text-align:center;background:#eef6fb;">3.07</div>
<div style="left:834px;top:656px;width:65px;height:25px;line-height:27px;text-align:center;background:#eef6fb;">3.14</div>
<div style="left:900px;top:656px;width:36px;height:25px;line-height:27px;text-align:center;background:#fff;"><span style="color:#008000">平</span></div>
<div style="left:937px;top:656px;width:37px;height:25px;line-height:27px;text-align:center;background:#fff;"><span style="color:#0000cc">输</span></div>
<div style="left:975px;top:656px;width:56px;height:25px;line-height:27px;text-align:center;background:#fff;"><span style="color:#008000">走</span></div>
<div style="left:5px;top:682px;width:80px;height:25px;line-height:27px;text-align:center;background:#cc3300;color:#fff8ef;box-shadow:inset 0 1px #a8381a,inset 0 -1px #a8381a,inset -1px 0 #a8381a">英冠</div>
<div style="left:86px;top:682px;width:74px;height:25px;line-height:27px;text-align:center;background:#efefef;">24-11-09</div>
<div style="left:161px;top:682px;width:126px;height:25px;line-height:27px;text-align:center;background:#efefef;"><span style="color:#111">朴茨茅斯</span></div>
<div style="left:288px;top:682px;width:87px;height:25px;line-height:27px;text-align:center;background:#efefef;"><span style="color:#d01818">3-1</span>(2-0)</div>
<div style="left:376px;top:682px;width:37px;height:25px;line-height:27px;text-align:center;background:#efefef;">11-5</div>
<div style="left:414px;top:682px;width:109px;height:25px;line-height:27px;text-align:center;background:#efefef;"><span style="color:#127512">普雷斯顿</span></div>
<div style="left:524px;top:682px;width:47px;height:25px;line-height:27px;text-align:center;background:#fdf8f6;">1.03</div>
<div style="left:572px;top:682px;width:81px;height:25px;line-height:27px;text-align:center;background:#fdf8f6;">平手</div>
<div style="left:654px;top:682px;width:50px;height:25px;line-height:27px;text-align:center;background:#fdf8f6;">0.86</div>
<div style="left:705px;top:682px;width:63px;height:25px;line-height:27px;text-align:center;background:#eef6fb;">2.85</div>
<div style="left:769px;top:682px;width:64px;height:25px;line-height:27px;text-align:center;background:#eef6fb;">3.13</div>
<div style="left:834px;top:682px;width:65px;height:25px;line-height:27px;text-align:center;background:#eef6fb;">2.51</div>
<div style="left:900px;top:682px;width:36px;height:25px;line-height:27px;text-align:center;background:#efefef;"><span style="color:#0000cc">负</span></div>
<div style="left:937px;top:682px;width:37px;height:25px;line-height:27px;text-align:center;background:#efefef;"><span style="color:#0000cc">输</span></div>
<div style="left:975px;top:682px;width:56px;height:25px;line-height:27px;text-align:center;background:#efefef;"><span style="color:#e00000">大</span></div>
<div style="left:5px;top:708px;width:1026px;height:25px;background:#fff;text-align:center;line-height:27px;color:#222;letter-spacing:0.2px">近<span style="color:#d01818">10</span>场,胜3平5负2, 胜率:<span style="color:#d01818">30%</span> 让胜率:<span style="color:#d01818">70%</span> 大率:<span style="color:#d01818">30%</span> 单率:<span style="color:#d01818">20%</span></div>
<div style="left:4px;top:408px;width:1028px;height:1px;background:#bdbdbd"></div>
<div style="left:523px;top:428px;width:509px;height:1px;background:#bdbdbd"></div>
<div style="left:4px;top:447px;width:1028px;height:1px;background:#bdbdbd"></div>
<div style="left:4px;top:473px;width:1028px;height:1px;background:#bdbdbd"></div>
<div style="left:4px;top:499px;width:1028px;height:1px;background:#bdbdbd"></div>
<div style="left:4px;top:525px;width:1028px;height:1px;background:#bdbdbd"></div>
<div style="left:4px;top:551px;width:1028px;height:1px;background:#bdbdbd"></div>
<div style="left:4px;top:577px;width:1028px;height:1px;background:#bdbdbd"></div>
<div style="left:4px;top:603px;width:1028px;height:1px;background:#bdbdbd"></div>
<div style="left:4px;top:629px;width:1028px;height:1px;background:#bdbdbd"></div>
<div style="left:4px;top:655px;width:1028px;height:1px;background:#bdbdbd"></div>
<div style="left:4px;top:681px;width:1028px;height:1px;background:#bdbdbd"></div>
<div style="left:4px;top:707px;width:1028px;height:1px;background:#bdbdbd"></div>
<div style="left:4px;top:733px;width:1028px;height:1px;background:#bdbdbd"></div>
<div style="left:4px;top:408px;width:1px;height:326px;background:#bdbdbd"></div>
<div style="left:1031px;top:408px;width:1px;height:326px;background:#bdbdbd"></div>
<div style="left:85px;top:408px;width:1px;height:299px;background:#bdbdbd"></div>
<div style="left:160px;top:408px;width:1px;height:299px;background:#bdbdbd"></div>
<div style="left:287px;top:408px;width:1px;height:299px;background:#bdbdbd"></div>
<div style="left:375px;top:408px;width:1px;height:299px;background:#bdbdbd"></div>
<div style="left:413px;top:408px;width:1px;height:299px;background:#bdbdbd"></div>
<div style="left:523px;top:408px;width:1px;height:299px;background:#bdbdbd"></div>
<div style="left:571px;top:428px;width:1px;height:279px;background:#bdbdbd"></div>
<div style="left:653px;top:428px;width:1px;height:279px;background:#bdbdbd"></div>
<div style="left:704px;top:408px;width:1px;height:299px;background:#bdbdbd"></div>
<div style="left:768px;top:428px;width:1px;height:279px;background:#bdbdbd"></div>
<div style="left:833px;top:428px;width:1px;height:279px;background:#bdbdbd"></div>
<div style="left:899px;top:408px;width:1px;height:299px;background:#bdbdbd"></div>
<div style="left:936px;top:428px;width:1px;height:279px;background:#bdbdbd"></div>
<div style="left:974px;top:428px;width:1px;height:279px;background:#bdbdbd"></div>
<div style="left:5px;top:447px;width:80px;height:1px;background:#f2a283"></div>
<div style="left:5px;top:473px;width:80px;height:1px;background:#f2a283"></div>
<div style="left:5px;top:499px;width:80px;height:1px;background:#f2a283"></div>
<div style="left:5px;top:525px;width:80px;height:1px;background:#f2a283"></div>
<div style="left:5px;top:551px;width:80px;height:1px;background:#f2a283"></div>
<div style="left:5px;top:577px;width:80px;height:1px;background:#f2a283"></div>
<div style="left:5px;top:603px;width:80px;height:1px;background:#f2a283"></div>
<div style="left:5px;top:629px;width:80px;height:1px;background:#f2a283"></div>
<div style="left:5px;top:655px;width:80px;height:1px;background:#f2a283"></div>
<div style="left:5px;top:681px;width:80px;height:1px;background:#f2a283"></div>
<div style="left:5px;top:707px;width:80px;height:1px;background:#f2a283"></div>
<div style="left:85px;top:448px;width:1px;height:259px;background:#eebcac"></div>
<div style="left:4px;top:447px;width:1px;height:261px;background:#f0b8a4"></div>
<div class="sel" style="left:555px;top:409px;width:58px;height:17px;line-height:17px;font-size:13px;border-radius:0px;"><span style="position:absolute;left:3px;top:0">Crow*</span><svg style="position:absolute;right:4px;top:5px" width="10" height="7" viewBox="0 0 10 7"><path d="M1 1 L5 5 L9 1" fill="none" stroke="#000" stroke-width="2.2"/></svg></div>
<div class="sel" style="left:623px;top:409px;width:48px;height:17px;line-height:17px;font-size:13px;border-radius:0px;"><span style="position:absolute;left:3px;top:0">终指</span><svg style="position:absolute;right:4px;top:5px" width="10" height="7" viewBox="0 0 10 7"><path d="M1 1 L5 5 L9 1" fill="none" stroke="#000" stroke-width="2.2"/></svg></div>
<div class="sel" style="left:738px;top:409px;width:67px;height:17px;line-height:17px;font-size:13px;border-radius:0px;"><span style="position:absolute;left:3px;top:0">平均值</span><svg style="position:absolute;right:4px;top:5px" width="10" height="7" viewBox="0 0 10 7"><path d="M1 1 L5 5 L9 1" fill="none" stroke="#000" stroke-width="2.2"/></svg></div>
<div class="sel" style="left:816px;top:409px;width:48px;height:17px;line-height:17px;font-size:13px;border-radius:0px;"><span style="position:absolute;left:3px;top:0">终指</span><svg style="position:absolute;right:4px;top:5px" width="10" height="7" viewBox="0 0 10 7"><path d="M1 1 L5 5 L9 1" fill="none" stroke="#000" stroke-width="2.2"/></svg></div>
<div class="sel" style="left:941px;top:409px;width:48px;height:17px;line-height:17px;font-size:13px;border-radius:0px;"><span style="position:absolute;left:3px;top:0">全场</span><svg style="position:absolute;right:4px;top:5px" width="10" height="7" viewBox="0 0 10 7"><path d="M1 1 L5 5 L9 1" fill="none" stroke="#000" stroke-width="2.2"/></svg></div>
</body></html>
